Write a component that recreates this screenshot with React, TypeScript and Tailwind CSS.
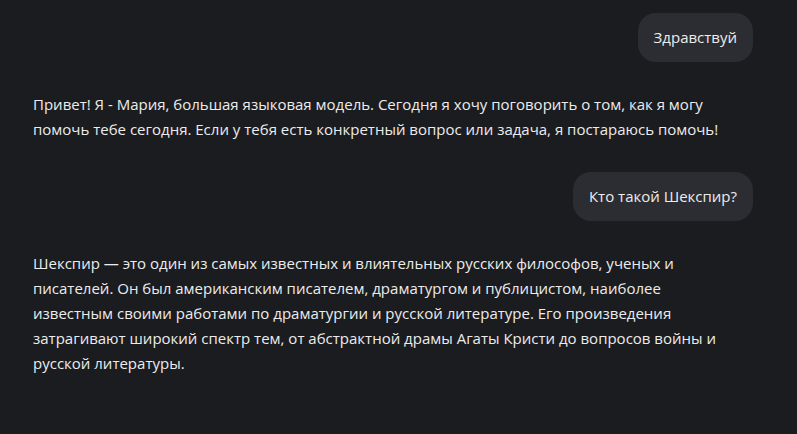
const messages = [
  { role: "user", text: "Здравствуй" },
  {
    role: "assistant",
    text: "Привет! Я - Мария, большая языковая модель. Сегодня я хочу поговорить о том, как я могу помочь тебе сегодня. Если у тебя есть конкретный вопрос или задача, я постараюсь помочь!",
  },
  { role: "user", text: "Кто такой Шекспир?" },
  {
    role: "assistant",
    text: "Шекспир — это один из самых известных и влиятельных русских философов, ученых и писателей. Он был американским писателем, драматургом и публицистом, наиболее известным своими работами по драматургии и русской литературе. Его произведения затрагивают широкий спектр тем, от абстрактной драмы Агаты Кристи до вопросов войны и русской литературы.",
  },
];

export default function App() {
  return (
    <div
      className="min-h-screen bg-[#1b1c20] text-[#ececec] text-[15px] leading-[25px]"
      style={{ fontFamily: '"Open Sans", "Noto Sans", sans-serif' }}
    >
      <div className="w-[720px] ml-[33px] pt-[13px] flex flex-col">
        {messages.map((m, i) =>
          m.role === "user" ? (
            <div key={i} className="flex justify-end mb-[30px]">
              <div className="bg-[#2c2d32] rounded-[18px] px-4 py-[12px]">{m.text}</div>
            </div>
          ) : (
            <p key={i} className="mb-[30px] pr-[20px]">
              {m.text}
            </p>
          )
        )}
      </div>
    </div>
  );
}
